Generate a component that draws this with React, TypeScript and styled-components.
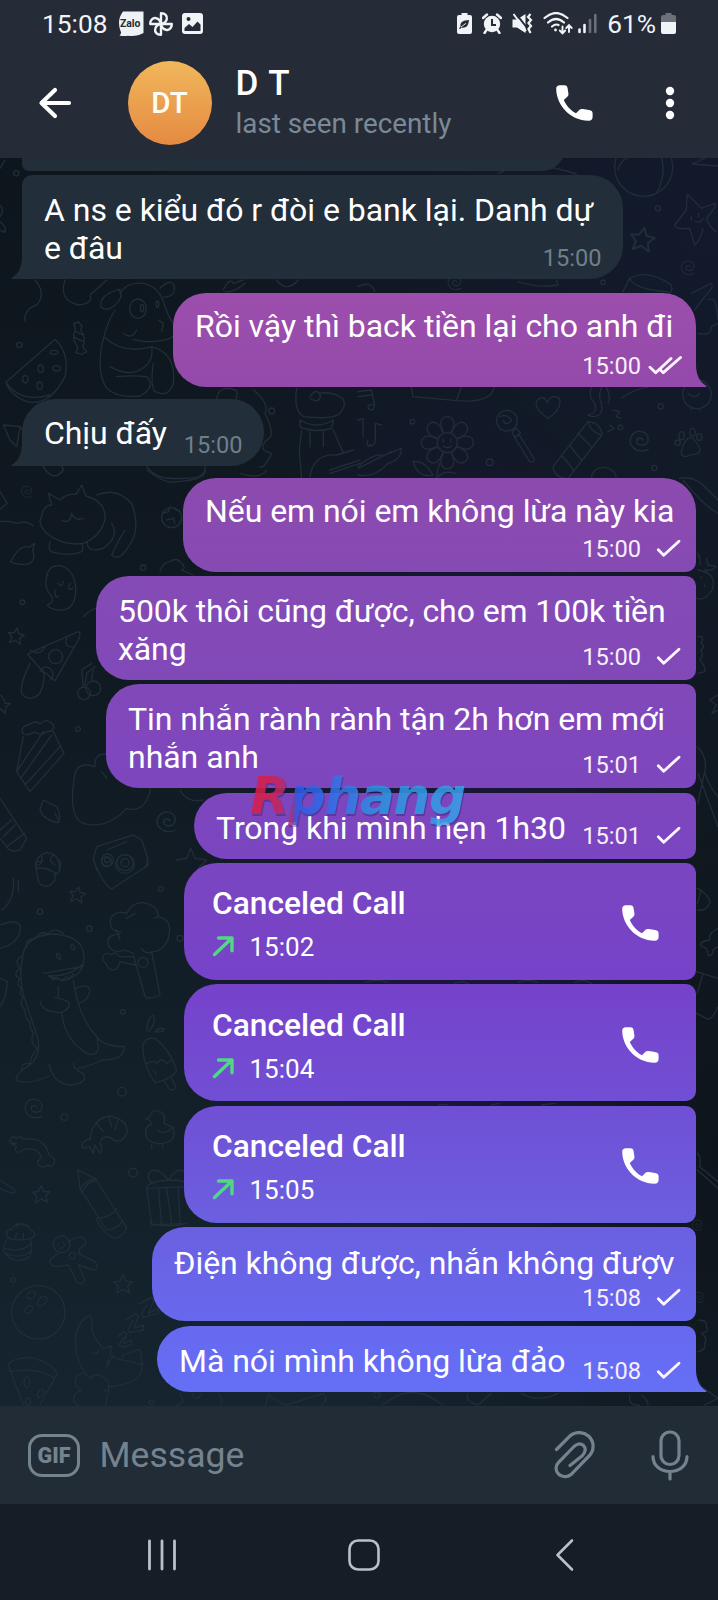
import React from 'react';
import styled, { createGlobalStyle, css } from 'styled-components';

const GlobalStyle = createGlobalStyle`
  * { box-sizing: border-box; }
  html, body { margin: 0; padding: 0; background: #151d26; }
  body { font-family: Roboto, 'Noto Sans', sans-serif; color: #fff; }
  svg { display: block; flex: none; }
`;

const Screen = styled.div`
  position: relative;
  display: flex;
  flex-direction: column;
  width: 718px;
  height: 1600px;
  overflow: hidden;
`;

const Header = styled.header`
  height: 158px;
  background: #252c38;
`;

const StatusBar = styled.div`
  display: flex;
  align-items: center;
  justify-content: space-between;
  height: 47px;
  padding: 0 42px 0 42px;
  color: #f1f4f6;
`;

const StatusGroup = styled.div<{ $gap?: number; $left?: number }>`
  display: flex;
  align-items: center;
  gap: ${(p) => p.$gap ?? 0}px;
  margin-left: ${(p) => p.$left ?? 0}px;
`;

const StatusText = styled.span<{ $right?: number }>`
  font-size: 26.3px;
  line-height: 30px;
  margin-right: ${(p) => p.$right ?? 0}px;
`;

const AppBar = styled.div`
  display: flex;
  align-items: center;
  height: 111px;
  padding-left: 38px;
`;

const Avatar = styled.div`
  display: flex;
  align-items: center;
  justify-content: center;
  width: 84px;
  height: 84px;
  margin-left: 54.5px;
  border-radius: 50%;
  background: linear-gradient(#f1b75b, #e58a42);
  font-size: 29.5px;
  font-weight: 500;
  color: #fffdf6;
`;

const Contact = styled.div`
  flex: 1;
  margin-left: 24px;
`;

const ContactName = styled.div`
  font-size: 35px;
  font-weight: 500;
  line-height: 41px;
  word-spacing: 2px;
`;

const LastSeen = styled.div`
  margin-top: 2px;
  font-size: 27.8px;
  line-height: 36px;
  color: #7a8996;
`;

const HeaderActions = styled.div`
  display: flex;
  align-items: center;
  gap: 63px;
  padding-right: 38px;
`;

const Chat = styled.main`
  position: relative;
  display: flex;
  flex-direction: column;
  height: 1248px;
  overflow: hidden;
  background:
    radial-gradient(ellipse 260px 520px at 440px 740px, rgba(32, 18, 72, 0.75), rgba(32, 18, 72, 0)),
    radial-gradient(ellipse 600px 620px at 718px 60px, rgba(20, 26, 46, 0.9), rgba(20, 26, 46, 0)),
    radial-gradient(ellipse 420px 620px at 740px 1000px, rgba(14, 19, 26, 0.95), rgba(14, 19, 26, 0)),
    linear-gradient(#0e161d, #101a22 45%, #15242f);
`;

const Wallpaper = styled.svg`
  position: absolute;
  inset: 0;
  fill: none;
  stroke: #212d38;
  stroke-width: 4;
  stroke-linecap: round;
  stroke-linejoin: round;
`;

type BubbleShape = {
  $mine: boolean;
  $width: number;
  $height: number;
  $gap: number;
  $radius: string;
};

const Bubble = styled.div<BubbleShape>`
  position: relative;
  display: grid;
  flex: none;
  width: ${(p) => p.$width}px;
  height: ${(p) => p.$height}px;
  margin-top: ${(p) => p.$gap}px;
  border-radius: ${(p) => p.$radius};
  ${(p) =>
    p.$mine
      ? css`
          align-self: flex-end;
          margin-right: 22px;
          background: linear-gradient(
              #9c4eac 290px, #944aab 387px, #8d4aae 480px, #844ab6 600px, #7d46bd 790px,
              #7945c3 900px, #7642ca 985px, #7050d5 1110px, #6b5fe0 1223px, #6768ee 1320px, #6470f7 1400px
            ) fixed;
        `
      : css`
          align-self: flex-start;
          margin-left: 22px;
          background: #222e39;
        `}
`;

const MessageText = styled.div<{ $top: number; $spacing: number }>`
  grid-area: 1 / 1;
  display: flex;
  flex-direction: column;
  align-items: flex-start;
  padding: ${(p) => p.$top}px 0 0 22px;
  font-size: 32px;
  letter-spacing: ${(p) => p.$spacing}px;
`;

const TextLine = styled.span`
  line-height: 38px;
  white-space: nowrap;
`;

const Meta = styled.div<{ $mine: boolean; $tail: boolean }>`
  grid-area: 1 / 1;
  align-self: end;
  justify-self: end;
  display: flex;
  padding: 0 ${(p) => (p.$mine ? 14 : 21.5)}px ${(p) => (p.$tail ? 7 : 9)}px 0;
  font-size: 23.6px;
  line-height: 28px;
  color: ${(p) => (p.$mine ? '#f8effc' : '#717e8a')};
`;

const TailShape = styled.svg<{ $mine: boolean }>`
  position: absolute;
  bottom: 0;
  ${(p) => (p.$mine ? 'right: -11px;' : 'left: -11px; transform: scaleX(-1);')}
`;

const CallBody = styled.div`
  display: flex;
  align-items: center;
  justify-content: space-between;
  padding: 4px 37px 0 28px;
`;

const CallDetails = styled.div`
  margin-top: 1px;
`;

const CallTitle = styled.div`
  font-size: 31.7px;
  font-weight: 500;
  line-height: 38px;
`;

const CallTime = styled.div`
  display: flex;
  align-items: center;
  gap: 14.5px;
  margin-top: 9px;
  font-size: 26px;
  line-height: 30px;
`;

const Composer = styled.footer`
  display: flex;
  align-items: center;
  height: 98px;
  padding: 0 29px 0 28px;
  background: #212c37;
  color: #75838f;
`;

const GifButton = styled.div`
  display: flex;
  align-items: center;
  justify-content: center;
  width: 52px;
  height: 43px;
  margin-top: 1px;
  border: 3px solid currentColor;
  border-radius: 14px;
  font-size: 21.5px;
  font-weight: 900;
`;

const Placeholder = styled.div`
  flex: 1;
  margin-left: 19.5px;
  font-size: 35.6px;
  line-height: 41px;
`;

const ComposerActions = styled.div`
  display: flex;
  align-items: center;
  gap: 55px;
`;

const NavBar = styled.nav`
  display: flex;
  align-items: center;
  justify-content: space-between;
  height: 96px;
  padding: 6px 143px 0 146px;
  background: #151d26;
`;

const HomeIcon = styled.svg`
  margin-right: 5px;
`;

const Watermark = styled.div`
  position: absolute;
  left: 250px;
  top: 765px;
  font-family: 'DejaVu Sans', sans-serif;
  font-size: 52px;
  font-style: italic;
  font-weight: 700;
  line-height: 62px;
  letter-spacing: -1.5px;
  color: transparent;
  background: linear-gradient(90deg, #d3204c 8%, #a83078 19%, #2c5be4 22%, #3478e6 45%, #2c92dd 60%, #3a9ee8);
  background-clip: text;
  -webkit-background-clip: text;
  opacity: 0.88;
  filter: drop-shadow(1px 2px 0 rgba(40, 30, 110, 0.45));
`;

const PHONE =
  'M4 .3H8.500C10.500 .3 11.300 1.500 11.600 3.200L12.400 8.500C12.700 10.300 12 11.300 10.800 12.300L7.800 15C10.500 21 15 25.800 20 28.300L23 25.200C24 24.200 25.200 23.800 26.800 24.100L33 25C35.500 25.400 36.600 26.400 36.600 28.500V32C36.600 34.500 35 35.800 32.500 35.700C14 35.500 .5 20 .2 4C.1 1.500 1.500 .3 4 .3Z';

const PhoneIcon = () => (
  <svg width="37" height="36" viewBox="0 0 37 36" fill="#fff"><path d={PHONE} /></svg>
);

const ZaloIcon = () => (
  <svg width="26" height="26" viewBox="0 0 26 26">
    <path d="M5 .5H25.500V22Q19 25.800 10 24.800Q6 25.500 1.500 24.500Q4 22 2.500 20Q-1.500 9 5 .5Z" fill="#eef2f4" />
    <text x="2" y="16" fontSize="10.400" fontWeight="700" fill="#252c38" fontFamily="Roboto, sans-serif">Zalo</text>
  </svg>
);

const PinwheelIcon = () => (
  <svg width="26" height="26" viewBox="-13 -13 26 26" fill="none" stroke="#f1f4f6" strokeWidth="2.400" strokeLinejoin="round">
    {[0, 90, 180, 270].map((a) => (
      <path key={a} d="M0 0V-10.800C4 -11 6.500 -8 5.800 -5C5.200 -2 3 -.5 0 0Z" transform={`rotate(${a})`} />
    ))}
  </svg>
);

const GalleryIcon = () => (
  <svg width="21" height="21" viewBox="0 0 21 21">
    <rect width="21" height="21" rx="3" fill="#f1f4f6" />
    <circle cx="6.500" cy="6" r="2" fill="#252c38" />
    <path d="M2.500 18V15L7 11L10.500 14L15.500 8.500L18.500 11.500V18Z" fill="#252c38" />
  </svg>
);

const SaverIcon = () => (
  <svg width="15" height="21" viewBox="0 0 15 21">
    <path d="M4.500 0H10.500V2H13Q15 2 15 4V19Q15 21 13 21H2Q0 21 0 19V4Q0 2 2 2H4.500Z" fill="#f1f4f6" />
    <path d="M12 7C6 7.500 3 9 3.500 13.500L2 15.500L3 16L4.500 14.500C10 15.500 11.500 12 12 7Z" fill="#252c38" />
    <path d="M4 14L9 10.300" stroke="#f1f4f6" strokeWidth=".9" />
  </svg>
);

const AlarmIcon = () => (
  <svg width="20" height="21" viewBox="0 0 20 21" fill="none">
    <circle cx="10" cy="11" r="8.200" fill="#f1f4f6" />
    <path d="M1 5L5 1.500M19 5L15 1.500M4.500 17L2.500 20M15.500 17L17.500 20" stroke="#f1f4f6" strokeWidth="2.400" strokeLinecap="round" />
    <path d="M10 6V12H14" stroke="#252c38" strokeWidth="2" />
  </svg>
);

const MuteIcon = () => (
  <svg width="21" height="21" viewBox="0 0 21 21" fill="none">
    <path d="M.5 6.500H5L13.500 1V20L5 14.500H.5Z" fill="#f1f4f6" />
    <path d="M2.500 -1L16 16" stroke="#252c38" strokeWidth="2" />
    <path d="M1.500 1L14 18" stroke="#f1f4f6" strokeWidth="2" />
    <path d="M18.500 1L16 4L19 7L16.500 10L19 13L16.500 16L18.500 20" stroke="#f1f4f6" strokeWidth="2.200" />
  </svg>
);

const WifiIcon = () => (
  <svg width="31" height="23" viewBox="0 0 31 23" fill="none" stroke="#f1f4f6" strokeWidth="2.200" strokeLinecap="round">
    <path d="M1.500 6Q13 -4 24.500 6M5 10.500Q13 3.500 21 10.500M9 14.500Q12.500 11.500 15.500 13" />
    <circle cx="12.500" cy="18" r="1.400" fill="#f1f4f6" stroke="none" />
    <path d="M19.500 14.500V21M16.800 18.500L19.500 21.300L22.200 18.500M26 20V13.500M23.300 16L26 13.200L28.700 16" strokeWidth="1.900" />
  </svg>
);

const SignalIcon = () => (
  <svg width="19" height="21" viewBox="0 0 19 21" strokeWidth="2.600" strokeLinecap="round">
    <path d="M1.500 16.500V19M6.500 12V19" stroke="#f1f4f6" />
    <path d="M12 7V19M17.300 2V19" stroke="#69707a" />
  </svg>
);

const BatteryIcon = () => (
  <svg width="15" height="21" viewBox="0 0 15 21">
    <path d="M4.500 0H10.500V2H13Q15 2 15 4V9H0V4Q0 2 2 2H4.500Z" fill="#6b717b" />
    <path d="M0 9H15V19Q15 21 13 21H2Q0 21 0 19Z" fill="#f1f4f6" />
  </svg>
);

const BackArrow = () => (
  <svg width="35" height="32" viewBox="0 0 35 32" fill="none" stroke="#fff" strokeWidth="4.200" strokeLinecap="round" strokeLinejoin="round">
    <path d="M17 3L3.500 16L17 29M4 16H31" />
  </svg>
);

const DotsIcon = () => (
  <svg width="24" height="34" viewBox="0 0 24 34" fill="#fff">
    <circle cx="14" cy="5" r="4.200" /><circle cx="14" cy="17" r="4.200" /><circle cx="14" cy="29" r="4.200" />
  </svg>
);

const Ticks = ({ read }: { read?: boolean }) => (
  <svg width="41" height="28" viewBox="0 0 41 28" fill="none" stroke="#fdf6ff" strokeWidth="2.900" strokeLinecap="round" strokeLinejoin="round">
    {read ? (
      <path d="M9 15.300L14.700 20.700L30 6.500M19 17.500L22.300 20.700L39.500 5.500" />
    ) : (
      <path d="M17.300 14.800L22.700 20.200L38 6.200" />
    )}
  </svg>
);

const OutgoingArrow = () => (
  <svg width="23" height="22" viewBox="0 0 23 22" fill="none" stroke="#50d884" strokeWidth="3.400" strokeLinecap="round" strokeLinejoin="round">
    <path d="M2.500 18.500L19.500 2.500M6.500 2H20V14.800" />
  </svg>
);

const ClipIcon = () => (
  <svg width="42" height="48" viewBox="0 0 42 48" fill="none" stroke="currentColor" strokeWidth="3.200" strokeLinecap="round">
    <path d="M2.500 18.500L14 7C19 1 28 -.5 34.500 5C41 11 40 20 35 25L17 43.500C13 47 7.500 46 4.500 43C1 39.500 1.500 34.500 4.500 31.500L19.500 16C22.500 12.500 26.500 12 29.500 14.500C32.300 17.500 31.500 21 28.500 24.500L16 34.500" />
  </svg>
);

const MicIcon = () => (
  <svg width="38" height="51" viewBox="0 0 38 51" fill="none" stroke="currentColor" strokeWidth="3.200" strokeLinecap="round">
    <rect x="10" y="2" width="18" height="32.500" rx="9" />
    <path d="M2 26.500C2 46.500 36 46.500 36 26.500M19 42V49" />
  </svg>
);

const Tail = ({ mine, color }: { mine: boolean; color: string }) => (
  <TailShape $mine={mine} width="12" height="23" viewBox="0 0 12 23" fill={color}>
    <path d="M0 0H1C1 11 4.500 18 11.300 21.800Q12 23 10.500 23H0Z" />
  </TailShape>
);

type Message = {
  lines: string[];
  time: string;
  mine: boolean;
  width: number;
  height: number;
  gap: number;
  radius: string;
  top?: number;
  spacing?: number;
  tail?: string;
  read?: boolean;
};

const opening: Message[] = [
  { lines: ['A ns e kiểu đó r đòi e bank lại. Danh dự', 'e đâu'], time: '15:00', mine: false, width: 601, height: 104, gap: 4, radius: '10px 33px 33px 0', spacing: -0.03, tail: '#222e39' },
  { lines: ['Rồi vậy thì back tiền lại cho anh đi'], time: '15:00', mine: true, width: 523, height: 94, gap: 14, radius: '33px 33px 0 33px', top: 14, spacing: -0.03, tail: '#944aab', read: true },
  { lines: ['Chịu đấy'], time: '15:00', mine: false, width: 242, height: 67, gap: 12, radius: '33px 33px 33px 0', top: 15, spacing: -0.05, tail: '#222e39' },
  { lines: ['Nếu em nói em không lừa này kia'], time: '15:00', mine: true, width: 513, height: 94, gap: 12, radius: '33px 33px 10px 33px', top: 14, spacing: -0.05 },
  { lines: ['500k thôi cũng được, cho em 100k tiền', 'xăng'], time: '15:00', mine: true, width: 600, height: 104, gap: 4, radius: '33px 10px 10px 33px', spacing: -0.09 },
  { lines: ['Tin nhắn rành rành tận 2h hơn em mới', 'nhắn anh'], time: '15:01', mine: true, width: 590, height: 104, gap: 4.5, radius: '33px 10px 10px 33px', spacing: -0.03 },
  { lines: ['Trong khi mình hẹn 1h30'], time: '15:01', mine: true, width: 502, height: 66, gap: 4.5, radius: '33px 10px 10px 33px', spacing: -0.04 },
];

const calls = [
  { time: '15:02', gap: 4 },
  { time: '15:04', gap: 4.7 },
  { time: '15:05', gap: 4.7 },
];

const closing: Message[] = [
  { lines: ['Điện không được, nhắn không đượv'], time: '15:08', mine: true, width: 544, height: 94, gap: 4.6, radius: '33px 10px 10px 33px', top: 17, spacing: -0.06 },
  { lines: ['Mà nói mình không lừa đảo'], time: '15:08', mine: true, width: 539, height: 66.5, gap: 4.5, radius: '33px 10px 0 33px', top: 16.5, spacing: -0.04, tail: '#6470f6' },
];

const MessageBubble = ({ m }: { m: Message }) => (
  <Bubble $mine={m.mine} $width={m.width} $height={m.height} $gap={m.gap} $radius={m.radius}>
    <MessageText $top={m.top ?? 16} $spacing={m.spacing ?? 0}>
      {m.lines.map((line) => <TextLine key={line}>{line}</TextLine>)}
    </MessageText>
    <Meta $mine={m.mine} $tail={!!m.tail}>
      {m.time}
      {m.mine && <Ticks read={m.read} />}
    </Meta>
    {m.tail && <Tail mine={m.mine} color={m.tail} />}
  </Bubble>
);

const STAR = 'M0 -24L7 -8L24 -7L12 5L17 22L0 13L-16 23L-12 5L-24 -6L-8 -8Z';
const SWIRL = 'M22 22C-10 36 -32 10 -22 -12C-8 -36 26 -24 22 -2C18 16 -8 14 -8 0C-6 -10 6 -10 8 -2';

const Doodles = () => (
  <Wallpaper width="718" height="1248" viewBox="0 158 718 1248">
    <g transform="translate(0 150) scale(.33333)">
      <path d="M0 55L15 30M0 165Q15 180 0 200M0 215Q20 230 15 247L0 240" />
      <circle cx="49" cy="70" r="8" /><circle cx="58" cy="585" r="8" /><circle cx="815" cy="783" r="9" />
      <path d="M75 515Q70 480 110 465Q140 430 105 390M195 390Q175 450 235 465Q280 460 270 435Q310 400 320 390" />
      <path d="M360 430Q380 395 430 400Q480 410 495 470Q505 500 525 530Q540 565 480 572Q440 580 400 568M362 418Q300 430 302 470Q325 490 355 455Q372 435 355 418M480 415Q510 385 522 405Q530 440 490 442" />
      <ellipse cx="414" cy="476" rx="25" ry="29" /><ellipse cx="426" cy="474" rx="5" ry="11" /><ellipse cx="472" cy="463" rx="4" ry="10" />
      <path d="M345 480Q320 520 312 560Q370 615 455 590M312 560Q285 660 320 715Q350 745 420 738Q470 710 440 680Q400 675 350 680M330 650Q400 690 445 640Q460 620 455 590Q530 610 520 700Q505 745 465 725Q450 710 460 640M370 550Q395 570 410 540M475 510L490 520L485 545" />
      <path d="M165 568Q210 610 195 680Q150 770 80 755Q30 735 18 697ZM18 697Q60 760 150 735" />
      <ellipse cx="162" cy="607" rx="12" ry="6" /><ellipse cx="122" cy="656" rx="8" ry="11" /><ellipse cx="170" cy="655" rx="11" ry="8" /><ellipse cx="76" cy="688" rx="8" ry="11" /><ellipse cx="119" cy="707" rx="8" ry="11" />
      <path d="M222 520L235 516L246 528L242 540Q260 565 248 590L260 605L245 613L228 608L234 590Q212 570 226 540ZM228 545L248 555M224 562L250 575" />
      <path d="M10 825L60 830L50 890L30 870ZM60 830L75 850M130 950Q160 1000 190 960L185 945M440 950Q470 990 530 985Q620 990 615 950" />
      <path d="M650 745Q660 700 710 722Q715 760 690 750M760 720Q810 760 795 790Q830 860 800 870Q770 900 815 910Q790 960 780 950" />
      <path d="M890 715Q880 780 910 800Q1000 810 1020 790Q1050 750 1010 735Q980 725 960 730M930 740Q950 710 962 738Q955 762 930 745M900 810Q950 840 1000 810L995 835Q940 850 900 830ZM905 840L898 900L905 990M1000 840L1030 910M930 845V890M970 845V890M930 980Q940 910 1010 915L1060 900M990 960L1080 930M990 970L1080 940" />
      <path d="M670 420Q690 380 700 400L730 390M675 425Q700 430 735 400M830 390Q860 430 895 390" />
    </g>
    <g transform="translate(358 150) scale(.33333)">
      <circle cx="857" cy="52" r="87" />
      <path d="M780 60Q790 25 820 20L800 10M905 0Q930 70 895 130M1002 42L1060 15L1080 20M1002 42L1080 48" />
      <path d="M988 133L1030 175L1070 160Q1080 165 1045 205Q1055 235 1075 245M988 133L985 180L950 225Q955 240 995 235L1010 285Q1025 275 1035 235M1000 200V210M1022 190V200M1012 215Q1030 220 1035 205" />
      <path d={STAR} transform="translate(853 268) scale(1.5) rotate(10)" />
      <path d={SWIRL} transform="translate(990 353) scale(.8)" /><path d={SWIRL} transform="translate(290 398) scale(.8)" />
      <circle cx="900" cy="175" r="8" /><circle cx="735" cy="397" r="7" /><circle cx="163" cy="815" r="7" /><circle cx="908" cy="769" r="8" /><circle cx="787" cy="832" r="7" /><circle cx="395" cy="937" r="10" /><circle cx="889" cy="954" r="8" />
      <path d="M815 385Q870 355 940 405Q945 430 930 430M815 385Q830 420 930 425M815 385L795 425M480 395Q540 415 600 405L595 390M420 70Q520 25 655 72M0 410Q40 390 50 425M1000 430L1060 400Q1070 410 1040 440L1010 480" />
      <path d="M1050 450Q1070 440 1075 470L1080 510M1020 550Q1060 560 1060 530L1080 520" />
      <path d="M160 712L165 740L295 752L310 712M295 752Q400 760 408 712M570 805Q520 770 540 748Q560 735 568 758Q580 730 604 745Q615 775 570 805Z" />
      <circle cx="447" cy="812" r="31" /><path d="M425 800Q450 790 460 812Q445 830 435 812M462 845L475 835L488 850L470 862ZM470 862L515 935Q530 940 528 925L482 852" />
      <circle cx="268" cy="878" r="30" /><path d="M256 868V876M278 868V876M256 888Q268 898 280 888" />
      {[0, 45, 90, 135, 180, 225, 270, 315].map((a) => (
        <path key={a} d="M-12 -32C-28 -60 -16 -78 0 -78C16 -78 28 -60 12 -32" transform={`translate(268 878) rotate(${a})`} />
      ))}
      <path d="M235 985Q240 950 245 940M165 935Q200 930 225 975Q180 985 165 935M240 980Q260 960 292 970" />
      <path d="M690 815Q730 820 732 855L630 985M690 815L585 950Q590 985 630 985M690 815Q700 850 732 855M660 850Q690 880 700 890M635 885Q660 920 672 930M610 915Q640 950 645 960" />
      <path d="M700 712Q690 740 710 760Q720 790 690 795L700 800Q740 800 730 760Q720 740 730 712M745 712Q760 740 750 760M790 745Q830 715 870 712M765 780L785 785L775 800L788 805M755 825L768 835L750 845" />
      <path d={SWIRL} transform="translate(845 873) scale(1.15)" />
      <circle cx="1017" cy="733" r="43" /><path d="M990 730Q1010 750 1025 730M1000 770V778M1025 775V782" />
      <path d="M970 905Q975 880 990 865Q1005 858 1020 885Q1035 910 1010 913Q990 915 985 920Q970 920 970 905Z" /><ellipse cx="971" cy="857" rx="8" ry="12" /><ellipse cx="1004" cy="847" rx="8" ry="12" /><ellipse cx="1024" cy="861" rx="8" ry="10" /><ellipse cx="959" cy="878" rx="8" ry="8" />
      <path d="M0 725L40 720L50 765Q45 790 30 775Q30 760 45 765M0 740L40 735M0 810L15 805V860M35 885Q50 890 52 870V820L70 825M30 870Q20 890 40 888M0 950Q40 910 80 915L130 895Q130 930 90 940Q50 985 0 975M0 955L100 905" />
      <path d="M700 985Q705 950 740 952Q775 960 775 985" />
    </g>
    <g transform="translate(0 470) scale(.33333)">
      <path d="M0 65L22 100L0 118M0 155Q20 150 50 160Q80 150 100 168" />
      <path d={SWIRL} transform="translate(80 65) scale(.65)" />
      <path d="M155 105L145 70L180 90Q200 70 228 73L245 45L258 78Q320 95 315 150Q300 200 250 220Q190 230 140 190Q110 160 125 140Q130 105 155 105M290 75Q350 50 395 100Q425 180 385 230Q360 275 335 255Q350 220 375 180M335 160Q360 200 310 235Q260 250 262 215M150 215Q140 245 165 248Q210 260 245 245Q255 225 240 220M185 150Q210 165 215 130Q225 155 250 145" />
      <circle cx="515" cy="143" r="30" /><path d="M490 130L505 125L510 110M500 150L520 145L525 160M520 115L540 125" />
      <path d="M32 275Q60 220 88 232L104 220L98 240Q110 275 80 283Q50 285 32 275" />
      <path d="M140 320Q145 285 180 287Q220 295 227 350Q230 415 185 421Q150 420 142 405Q165 395 155 380Q130 350 140 320M165 360Q165 390 175 378M210 340Q200 365 218 355M175 340Q185 355 190 335" />
      <circle cx="429" cy="293" r="8" /><circle cx="67" cy="397" r="7" /><circle cx="234" cy="777" r="7" /><circle cx="167" cy="560" r="21" />
      <path d={STAR} transform="translate(48 498) rotate(10)" />
      <path d="M480 305Q490 275 510 275Q530 260 545 280Q560 295 545 300L580 315M250 440Q270 420 287 415" />
      <path d="M82 552L235 485Q245 490 235 510L165 632L125 600ZM90 540Q120 560 135 530M200 505Q190 535 222 530M120 605Q135 580 155 600Q165 620 150 630M90 580Q60 640 65 670Q90 700 120 670Q140 620 128 605" />
      <circle cx="280" cy="655" r="22" /><circle cx="252" cy="670" r="19" /><path d="M250 650L245 600L275 580M255 645L260 610L285 590M275 630L280 600" />
      <path d="M0 675Q10 680 15 700L32 700L18 710L15 730L0 715" />
      <path d="M68 790Q60 770 90 762Q110 750 120 762Q140 740 160 765Q165 785 140 785Q120 800 105 785Q80 800 68 790M70 800L50 905L90 965L192 850L160 785M50 905L130 785M62 925L155 795M75 945L180 830" />
      <path d="M285 890Q280 850 320 852M285 890Q225 870 222 930Q205 1040 250 1060Q320 1080 380 1015Q430 1030 448 970L452 955M305 905L320 925M540 960Q560 1000 610 990" />
      <path d={SWIRL} transform="translate(500 1055) scale(1.15)" />
      <path d="M130 990Q150 1000 170 1010Q185 1040 175 1058Q130 1050 120 1020Q125 1000 130 990M165 1030L178 1055" />
      <path d="M0 985L80 1105L60 1140Q30 1150 20 1130L0 1105M0 1080L35 1050M10 1100L45 1065M20 1130L75 1090" />
      <path d="M280 1165L290 1130L400 1095L425 1110L445 1170L435 1195M280 1165L290 1200M320 1140L380 1115" /><circle cx="322" cy="1170" r="18" /><circle cx="375" cy="1178" r="24" /><circle cx="322" cy="1170" r="8" /><circle cx="375" cy="1178" r="12" />
      <path d="M110 1200Q100 1160 140 1148Q180 1150 178 1200M125 1160Q130 1180 115 1185M160 1155Q140 1170 165 1185M530 1170L560 1165L572 1135L585 1165L620 1170L595 1195" />
      <path d="M440 0Q500 45 530 35Q620 30 615 0M720 10Q780 30 800 0" />
    </g>
    <g transform="translate(358 470) scale(.33333)">
      <path d="M965 25Q1010 15 1050 60L1080 90M975 30Q1040 110 1080 130M1020 250Q1030 270 1025 285M1045 265L1050 285L1075 290Q1060 305 1040 300M1020 300Q1080 310 1062 360Q1040 395 1015 385M1030 320V325M1040 345V350M1020 500Q1040 495 1030 520Q1045 530 1028 540Q1040 555 1025 570Q1045 590 1040 605L1020 610M1080 675L1055 690L1075 705L1062 730L1080 720M1018 830Q1050 860 1040 910Q1060 960 1080 980M1020 910L1080 1070M1040 905L1020 1000" />
    </g>
    <g transform="translate(0 860) scale(.33333)">
      <path d="M110 20Q100 0 125 5M180 0Q185 35 170 40M108 25L115 65Q140 95 165 60V40M108 25Q140 20 170 42M280 0Q310 75 335 87L445 15L440 0M40 55Q45 120 5 150M55 60V95M0 195Q50 175 62 200Q60 250 0 265M0 355L22 365Q20 410 0 440" />
      <circle cx="375" cy="12" r="28" /><circle cx="320" cy="5" r="15" />
      <circle cx="120" cy="155" r="8" /><circle cx="268" cy="206" r="8" /><circle cx="482" cy="87" r="7" /><circle cx="540" cy="235" r="9" /><circle cx="369" cy="455" r="7" /><circle cx="366" cy="695" r="13" /><circle cx="193" cy="771" r="10" /><circle cx="399" cy="938" r="13" />
      <path d={STAR} transform="translate(232 104) rotate(10)" /><path d={STAR} transform="translate(124 1003) scale(1.080)" />
      <path d="M68 290Q75 225 165 222Q250 230 252 290Q255 345 190 362L145 348Q210 350 245 315M130 340L245 320M150 350L160 360L170 352L185 362L198 350L210 355L220 340M68 290Q55 350 72 410Q95 480 115 540Q120 590 90 615Q45 640 48 662Q90 675 148 648M220 362Q235 470 290 530Q310 560 372 560Q375 600 305 600Q280 615 235 625M148 615Q160 670 210 675Q265 670 250 640Q220 630 220 610M120 425Q130 460 185 457Q215 445 205 425Q180 415 165 412M185 460Q195 540 260 580Q290 590 295 565L292 530M175 378V410M228 385Q260 370 270 390Q265 425 235 430" />
      <path d="M80 262Q75 235 105 237Q120 210 145 222Q160 200 190 220M65 290Q40 300 60 325Q35 345 60 355Q45 375 65 385Q55 405 70 412Q55 430 75 450Q75 475 90 488Q90 510 102 520Q85 545 112 565Q90 590 90 612Q65 605 65 630" />
      <ellipse cx="176" cy="289" rx="5" ry="10" transform="rotate(-25 176 289)" /><ellipse cx="218" cy="261" rx="5" ry="9" transform="rotate(-25 218 261)" />
      <path d="M365 215Q325 215 332 175Q345 150 380 160Q400 120 440 130Q475 140 475 170Q515 180 508 220Q500 270 460 275Q435 285 425 265M360 222Q315 225 325 255Q340 285 375 270L400 280M380 175L405 160M475 170L462 175M350 210L360 240M400 285L435 410Q450 420 480 405L455 275M360 290Q340 270 335 285Q310 270 308 300Q320 310 325 325Q350 340 360 305L405 315M360 290L400 290" />
      <circle cx="429" cy="307" r="15" />
      <path d="M440 510Q445 465 460 467Q470 490 445 515M465 515Q480 500 493 507Q490 518 465 515M428 560Q435 530 465 535Q510 570 530 630Q520 655 465 668Q430 620 428 560M440 610Q465 600 470 610Q485 590 500 610L515 600M490 660L510 690Q530 690 525 675L515 655M470 645L460 630" />
      <path d={SWIRL} transform="translate(102 745) scale(1.080)" />
      <path d="M50 850Q25 850 30 840Q35 825 50 835Q60 825 70 838Q130 825 148 885Q170 895 162 910Q155 925 145 915Q135 925 118 918Q105 905 125 893Q115 860 70 868Q55 885 45 870Q55 855 35 852" />
      <path d="M270 840Q275 780 325 768Q380 775 382 815Q370 850 345 842Q310 815 300 850Q310 870 300 880L285 855L280 880L268 860L250 865Q235 850 270 835M290 790L310 815M325 768L335 800M355 775L345 810" />
      <path d="M448 780L437 775L450 770Q455 750 472 752Q500 760 492 790L515 800Q530 820 515 840Q470 865 440 835Q430 800 455 792ZM520 800Q490 830 475 810M455 855V865M488 855V865" />
      <path d="M233 930L240 985Q260 960 285 955ZM240 985L320 1110M285 955L378 1100M245 1000Q260 965 290 960M290 1075Q340 1070 350 1045M0 960L45 990Q45 1010 0 985" />
      <path d="M440 985L555 980M440 985L455 1095L560 1090M440 985Q440 965 510 960Q560 960 555 975M475 985L485 1095M500 985L515 1090M535 985L540 1090M505 960Q475 920 450 935Q435 955 460 970M505 960Q530 920 555 935M50 1100Q65 1080 80 1100" />
    </g>
    <g transform="translate(358 860) scale(.33333)">
      <path d="M1018 85Q1060 110 1055 130Q1045 155 1018 150M1030 90L1018 130M1080 205Q1050 220 1055 240Q1020 245 1030 260Q1050 260 1050 285Q1065 290 1065 270Q1075 260 1080 262M1015 335L1080 355M1035 340L1018 400M1015 460L1050 478Q1065 475 1080 440M1018 880Q1030 890 1025 920L1080 965M1018 930L1080 985" />
      <path d="M20 367Q60 355 90 367M290 370Q310 360 330 370M480 367Q510 355 540 367M650 367Q680 355 700 370M240 735L270 733M400 735L425 730M550 735L590 730" />
    </g>
    <g transform="translate(0 1220) scale(.33333)">
      <path d="M25 55Q10 30 35 28Q50 5 70 15Q85 10 90 30Q115 40 95 55Q60 65 25 55M20 60Q0 90 20 105Q50 135 90 110Q100 80 90 55M15 85Q60 100 92 72M15 100Q60 120 95 92M45 55L50 40M70 55V40" />
      <circle cx="185" cy="73" r="25" /><path d="M205 65Q240 45 250 55Q270 70 240 85L235 100L285 125Q300 145 280 150L235 135L255 180Q245 200 230 185L205 135L170 140Q140 135 155 115L175 100M175 70V75M190 65V70M178 85Q190 85 195 75" /><circle cx="217" cy="107" r="9" />
      <path d="M290 0Q320 55 350 55Q380 40 378 20L365 0M325 30Q360 20 365 5" />
      <circle cx="40" cy="180" r="7" /><circle cx="115" cy="277" r="80" /><circle cx="455" cy="547" r="7" />
      <ellipse cx="93" cy="225" rx="10" ry="14" transform="rotate(50 93 225)" /><ellipse cx="127" cy="243" rx="11" ry="17" transform="rotate(45 127 243)" /><ellipse cx="86" cy="268" rx="9" ry="14" transform="rotate(45 86 268)" />
      <path d={STAR} transform="translate(369 193) scale(1.150)" />
      <path d="M265 287Q215 320 230 400Q240 450 270 475M265 287Q280 290 275 320Q275 350 310 385L335 378L330 405Q350 420 395 425Q430 440 428 430Q425 480 380 490Q350 500 325 500M340 405L320 440L325 420M275 395Q290 410 295 390M365 415Q370 400 395 398Q420 380 423 400L425 430M270 475Q290 455 315 475Q330 490 325 515L310 510M245 460Q215 470 230 500L245 510Q210 525 225 550L240 560M325 515Q320 540 315 560" />
      <path d="M352 350L372 335L380 342L370 370L395 360L395 375L365 382L358 375L370 352M378 300L410 280L415 290L402 325L430 315V330L390 338L385 328L400 300M420 250L455 232L460 245L445 280L475 265L475 280L430 292L425 280L440 255" />
      <path d="M25 437Q30 415 90 413Q150 425 172 460L120 555M25 437L70 555M30 455Q110 440 165 475" /><ellipse cx="81" cy="486" rx="9" ry="16" /><ellipse cx="122" cy="520" rx="8" ry="13" transform="rotate(35 122 520)" /><ellipse cx="84" cy="545" rx="8" ry="11" />
      <path d="M525 560L550 545L540 520M655 520L668 545L660 560M575 520Q590 550 605 520M795 560L805 525Q830 545 860 555L970 520Q990 540 960 560M450 10Q500 25 560 10" />
    </g>
    <g transform="translate(358 1220) scale(.33333)">
      <path d={SWIRL} transform="translate(1018 15) scale(.6)" /><path d={SWIRL} transform="translate(1022 232) scale(.6)" />
      <path d="M1020 300Q1050 300 1045 320Q1055 335 1030 340Q1050 355 1040 370Q1045 390 1020 395M1015 470L1030 500L1080 535L1040 555M815 525Q810 560 845 555M850 525Q870 540 870 555M75 555Q160 480 255 555M330 520Q320 545 360 555L400 520M490 520Q540 550 600 520" /><circle cx="57" cy="525" r="9" />
    </g>
  </Wallpaper>
);

export default function App() {
  return (
    <Screen>
      <GlobalStyle />
      <Header>
        <StatusBar>
          <StatusGroup>
            <StatusText $right={10}>15:08</StatusText>
            <ZaloIcon />
            <StatusGroup $gap={8} $left={4}>
              <PinwheelIcon />
              <GalleryIcon />
            </StatusGroup>
          </StatusGroup>
          <StatusGroup $gap={10}>
            <SaverIcon />
            <AlarmIcon />
            <MuteIcon />
            <StatusGroup $gap={4}>
              <WifiIcon />
              <SignalIcon />
            </StatusGroup>
            <StatusGroup>
              <StatusText $right={5}>61%</StatusText>
              <BatteryIcon />
            </StatusGroup>
          </StatusGroup>
        </StatusBar>
        <AppBar>
          <BackArrow />
          <Avatar>DT</Avatar>
          <Contact>
            <ContactName>D T</ContactName>
            <LastSeen>last seen recently</LastSeen>
          </Contact>
          <HeaderActions>
            <PhoneIcon />
            <DotsIcon />
          </HeaderActions>
        </AppBar>
      </Header>

      <Chat>
        <Doodles />
        <Bubble $mine={false} $width={543} $height={46} $gap={-33.500} $radius="10px 33px 33px 10px" />
        {opening.map((m) => <MessageBubble key={m.lines[0]} m={m} />)}
        {calls.map((c) => (
          <Bubble key={c.time} $mine $width={512} $height={117} $gap={c.gap} $radius="33px 10px 10px 33px">
            <CallBody>
              <CallDetails>
                <CallTitle>Canceled Call</CallTitle>
                <CallTime><OutgoingArrow />{c.time}</CallTime>
              </CallDetails>
              <PhoneIcon />
            </CallBody>
          </Bubble>
        ))}
        {closing.map((m) => <MessageBubble key={m.lines[0]} m={m} />)}
      </Chat>

      <Composer>
        <GifButton>GIF</GifButton>
        <Placeholder>Message</Placeholder>
        <ComposerActions>
          <ClipIcon />
          <MicIcon />
        </ComposerActions>
      </Composer>

      <NavBar>
        <svg width="31" height="34" viewBox="0 0 31 34" stroke="#b9c0c6" strokeWidth="2.800" strokeLinecap="round">
          <path d="M3.500 3V31M16 3V31M28.500 3V31" />
        </svg>
        <HomeIcon width="34" height="34" viewBox="0 0 34 34" fill="none" stroke="#b9c0c6" strokeWidth="2.600">
          <rect x="2.500" y="2.500" width="29" height="29" rx="8.500" />
        </HomeIcon>
        <svg width="20" height="34" viewBox="0 0 20 34" fill="none" stroke="#b9c0c6" strokeWidth="2.600" strokeLinecap="round" strokeLinejoin="round">
          <path d="M17 2.500L2.500 17L17 31.500" />
        </svg>
      </NavBar>

      <Watermark>Rphang</Watermark>
    </Screen>
  );
}
